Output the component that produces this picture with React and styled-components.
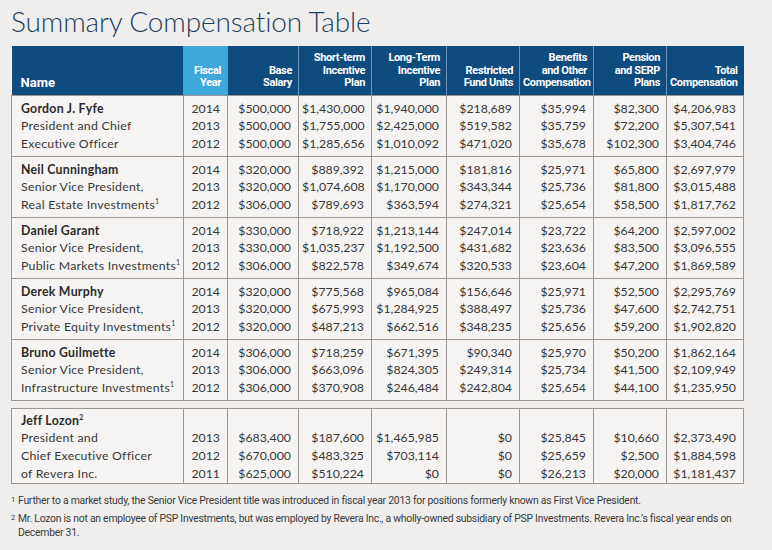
import React from "react";
import styled, { createGlobalStyle } from "styled-components";

const GlobalStyle = createGlobalStyle`
  html, body { margin: 0; padding: 0; background: #efeeec; }
  body { font-family: Lato, "Open Sans", sans-serif; color: #333; }
`;

const Page = styled.div`
  width: 772px;
  height: 550px;
  padding: 4px 0 0 11px;
  box-sizing: border-box;
  overflow: hidden;
`;

const Title = styled.h1`
  margin: 0;
  height: 42px;
  font-family: Lato, sans-serif;
  font-weight: 300;
  font-size: 28px;
  line-height: 34px;
  color: #1f3f5f;
  letter-spacing: -0.15px;
`;

const Table = styled.table`
  width: 732px;
  table-layout: fixed;
  border-collapse: collapse;
  margin-top: ${(p) => p.$gap || 0}px;
  background: #f5f4f2;
`;

const Th = styled.th`
  background: ${(p) => (p.$accent ? "#3fa8da" : "#0e4c80")};
  color: #fff;
  font-family: Roboto, sans-serif;
  font-weight: 700;
  font-size: ${(p) => (p.$big ? "13px" : "11px")};
  letter-spacing: ${(p) => (p.$big ? "0" : "-0.35px")};
  line-height: 12.5px;
  text-align: ${(p) => (p.$left ? "left" : "right")};
  vertical-align: bottom;
  padding: 0 6px 5px ${(p) => (p.$left ? "9px" : "3px")};
  height: 49px;
  box-sizing: border-box;
  border-left: 1px solid #6f93b8;
  &:first-child { border-left: none; }
`;

const Td = styled.td`
  border: 1px solid #9a9693;
  padding: ${(p) => (p.$tall ? "3px 7px 0.5px" : "4px 7px 3.3px")};
  padding-left: ${(p) => (p.$left ? "9px" : "3px")};
  text-align: ${(p) => (p.$left ? "left" : "right")};
  vertical-align: top;
  font-family: Lato, sans-serif;
  font-size: 12.3px;
  letter-spacing: ${(p) => (p.$left ? "0.25px" : "0")};
  line-height: 17.6px;
  color: #353535;
  white-space: nowrap;
`;

const Line = styled.div`
  height: 17.6px;
  font-weight: ${(p) => (p.$bold ? 700 : 400)};
  color: ${(p) => (p.$bold ? "#2b2b2b" : "#383838")};
`;

const Sup = styled.sup`
  font-size: 7px;
  line-height: 0;
  vertical-align: 5px;
  margin-left: 0;
`;

const Notes = styled.div`
  margin-top: 10px;
  font-family: Roboto, sans-serif;
  font-size: 10.4px;
  letter-spacing: -0.25px;
  color: #3a3a3a;
  width: 735px;
`;

const Note = styled.div`
  display: flex;
  line-height: 14px;
  margin-bottom: ${(p) => (p.$space ? "4px" : "0")};
`;

const Marker = styled.span`
  flex: 0 0 7px;
  font-size: 7.5px;
  line-height: 11px;
`;

const widths = [172, 44, 71, 73, 75, 73, 74, 73, 77];

const Cols = () => (
  <colgroup>
    {widths.map((w, i) => (
      <col key={i} style={{ width: w }} />
    ))}
  </colgroup>
);

const headers = [
  ["Name"],
  ["Fiscal", "Year"],
  ["Base", "Salary"],
  ["Short-term", "Incentive", "Plan"],
  ["Long-Term", "Incentive", "Plan"],
  ["Restricted", "Fund Units"],
  ["Benefits", "and Other", "Compensation"],
  ["Pension", "and SERP", "Plans"],
  ["Total", "Compensation"],
];

const people = [
  {
    name: "Gordon J. Fyfe",
    title: ["President and Chief", "Executive Officer"],
    sup: false,
    rows: [
      ["2014", "$500,000", "$1,430,000", "$1,940,000", "$218,689", "$35,994", "$82,300", "$4,206,983"],
      ["2013", "$500,000", "$1,755,000", "$2,425,000", "$519,582", "$35,759", "$72,200", "$5,307,541"],
      ["2012", "$500,000", "$1,285,656", "$1,010,092", "$471,020", "$35,678", "$102,300", "$3,404,746"],
    ],
  },
  {
    name: "Neil Cunningham",
    title: ["Senior Vice President,", "Real Estate Investments"],
    sup: true,
    rows: [
      ["2014", "$320,000", "$889,392", "$1,215,000", "$181,816", "$25,971", "$65,800", "$2,697,979"],
      ["2013", "$320,000", "$1,074,608", "$1,170,000", "$343,344", "$25,736", "$81,800", "$3,015,488"],
      ["2012", "$306,000", "$789,693", "$363,594", "$274,321", "$25,654", "$58,500", "$1,817,762"],
    ],
  },
  {
    name: "Daniel Garant",
    title: ["Senior Vice President,", "Public Markets Investments"],
    sup: true,
    rows: [
      ["2014", "$330,000", "$718,922", "$1,213,144", "$247,014", "$23,722", "$64,200", "$2,597,002"],
      ["2013", "$330,000", "$1,035,237", "$1,192,500", "$431,682", "$23,636", "$83,500", "$3,096,555"],
      ["2012", "$306,000", "$822,578", "$349,674", "$320,533", "$23,604", "$47,200", "$1,869,589"],
    ],
  },
  {
    name: "Derek Murphy",
    title: ["Senior Vice President,", "Private Equity Investments"],
    sup: true,
    rows: [
      ["2014", "$320,000", "$775,568", "$965,084", "$156,646", "$25,971", "$52,500", "$2,295,769"],
      ["2013", "$320,000", "$675,993", "$1,284,925", "$388,497", "$25,736", "$47,600", "$2,742,751"],
      ["2012", "$320,000", "$487,213", "$662,516", "$348,235", "$25,656", "$59,200", "$1,902,820"],
    ],
  },
  {
    name: "Bruno Guilmette",
    title: ["Senior Vice President,", "Infrastructure Investments"],
    sup: true,
    rows: [
      ["2014", "$306,000", "$718,259", "$671,395", "$90,340", "$25,970", "$50,200", "$1,862,164"],
      ["2013", "$306,000", "$663,096", "$824,305", "$249,314", "$25,734", "$41,500", "$2,109,949"],
      ["2012", "$306,000", "$370,908", "$246,484", "$242,804", "$25,654", "$44,100", "$1,235,950"],
    ],
  },
];

const lozon = [
  ["2013", "$683,400", "$187,600", "$1,465,985", "$0", "$25,845", "$10,660", "$2,373,490"],
  ["2012", "$670,000", "$483,325", "$703,114", "$0", "$25,659", "$2,500", "$1,884,598"],
  ["2011", "$625,000", "$510,224", "$0", "$0", "$26,213", "$20,000", "$1,181,437"],
];

export default function App() {
  return (
    <Page>
      <GlobalStyle />
      <Title>Summary Compensation Table</Title>
      <Table>
        <Cols />
        <thead>
          <tr>
            {headers.map((h, i) => (
              <Th key={i} $left={i === 0} $big={i === 0} $accent={i === 1}>
                {h.map((l, j) => (
                  <div key={j}>{l}</div>
                ))}
              </Th>
            ))}
          </tr>
        </thead>
        <tbody>
          {people.map((p) => (
            <tr key={p.name}>
              <Td $left>
                <Line $bold>{p.name}</Line>
                {p.title.map((t, j) => (
                  <Line key={j}>
                    {t}
                    {p.sup && j === 1 && <Sup>1</Sup>}
                  </Line>
                ))}
              </Td>
              {p.rows[0].map((_, c) => (
                <Td key={c}>
                  {p.rows.map((r, k) => (
                    <Line key={k}>{r[c]}</Line>
                  ))}
                </Td>
              ))}
            </tr>
          ))}
        </tbody>
      </Table>
      <Table $gap={7}>
        <Cols />
        <tbody>
          <tr>
            <Td $left $tall>
              <Line $bold>
                Jeff Lozon<Sup>2</Sup>
              </Line>
              <Line>President and</Line>
              <Line>Chief Executive Officer</Line>
              <Line>of Revera Inc.</Line>
            </Td>
            {lozon[0].map((_, c) => (
              <Td key={c} $tall>
                <Line>&nbsp;</Line>
                {lozon.map((r, k) => (
                  <Line key={k}>{r[c]}</Line>
                ))}
              </Td>
            ))}
          </tr>
        </tbody>
      </Table>
      <Notes>
        <Note $space>
          <Marker>1</Marker>
          <span>
            Further to a market study, the Senior Vice President title was introduced in fiscal year 2013 for
            positions formerly known as First Vice President.
          </span>
        </Note>
        <Note>
          <Marker>2</Marker>
          <span>
            Mr. Lozon is not an employee of PSP Investments, but was employed by Revera Inc., a wholly-owned
            subsidiary of PSP Investments. Revera Inc.’s fiscal year ends on December 31.
          </span>
        </Note>
      </Notes>
    </Page>
  );
}
